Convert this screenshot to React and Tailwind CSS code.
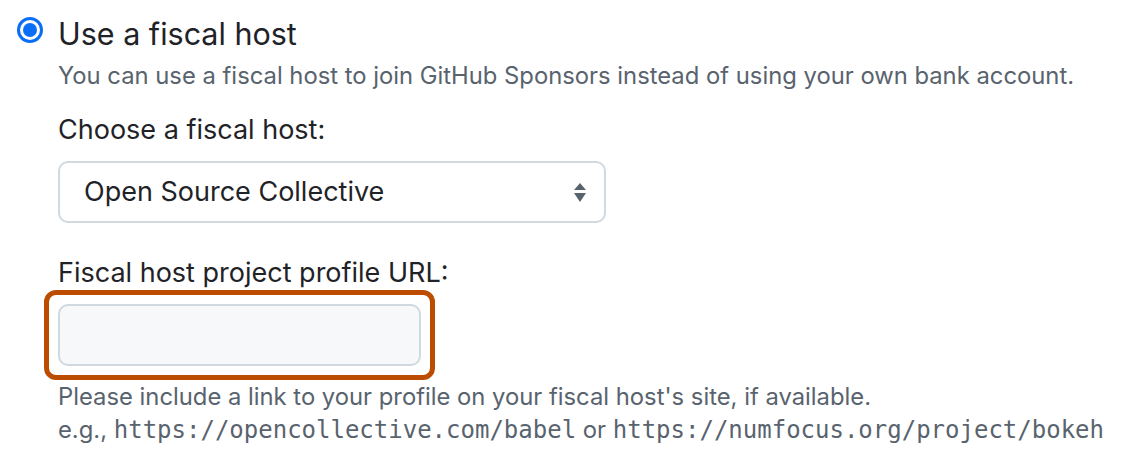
import React from "react";

export default function App() {
  return (
    <div className="w-[1126px] h-[466px] bg-white text-[#1f2328] font-['Inter',sans-serif]">
      <div className="flex pt-[17px] pl-[17px]">
        {/* radio */}
        <div className="w-[26px] h-[26px] rounded-full border-[3px] border-[#0b6ef7] flex items-center justify-center shrink-0">
          <div className="w-[14px] h-[14px] rounded-full bg-[#0b6ef7]" />
        </div>
        <div className="ml-[15px] flex flex-col">
          <div className="text-[30.5px] leading-[34px]">Use a fiscal host</div>
          <div className="mt-[10px] text-[23.8px] leading-[30px] text-[#59636e]">
            You can use a fiscal host to join GitHub Sponsors instead of using your own bank account.
          </div>
          <label className="mt-[23px] text-[27px] leading-[32px]">Choose a fiscal host:</label>
          <div className="mt-[15px] w-[548px] h-[62px] rounded-[10px] border-2 border-[#d1d9e0] flex items-center justify-between pl-[24px] pr-[18px]">
            <span className="text-[27px]">Open Source Collective</span>
            <svg width="12" height="19" viewBox="0 0 12 19">
              <path d="M6 0 L12 7 H0 Z" fill="#59636e" />
              <path d="M6 19 L12 10 H0 Z" fill="#59636e" />
            </svg>
          </div>
          <label className="mt-[34px] text-[27px] leading-[32px]">Fiscal host project profile URL:</label>
          <div className="-ml-[14px] mt-[1px] w-[391px] h-[90px] rounded-[12px] border-[5px] border-[#bc4c00] p-[9px]">
            <div className="w-full h-full rounded-[10px] border-2 border-[#d1d9e0] bg-[#f6f8fa]" />
          </div>
          <div className="mt-[2px] text-[23.8px] leading-[30px] text-[#59636e]">
            Please include a link to your profile on your fiscal host's site, if available.
          </div>
          <div className="mt-[3px] text-[23.8px] leading-[30px] text-[#59636e]">
            e.g., <code className="font-['DejaVu_Sans_Mono',monospace] text-[24px]">https://opencollective.com/babel</code> or{" "}
            <code className="font-['DejaVu_Sans_Mono',monospace] text-[24px]">https://numfocus.org/project/bokeh</code>
          </div>
        </div>
      </div>
    </div>
  );
}
